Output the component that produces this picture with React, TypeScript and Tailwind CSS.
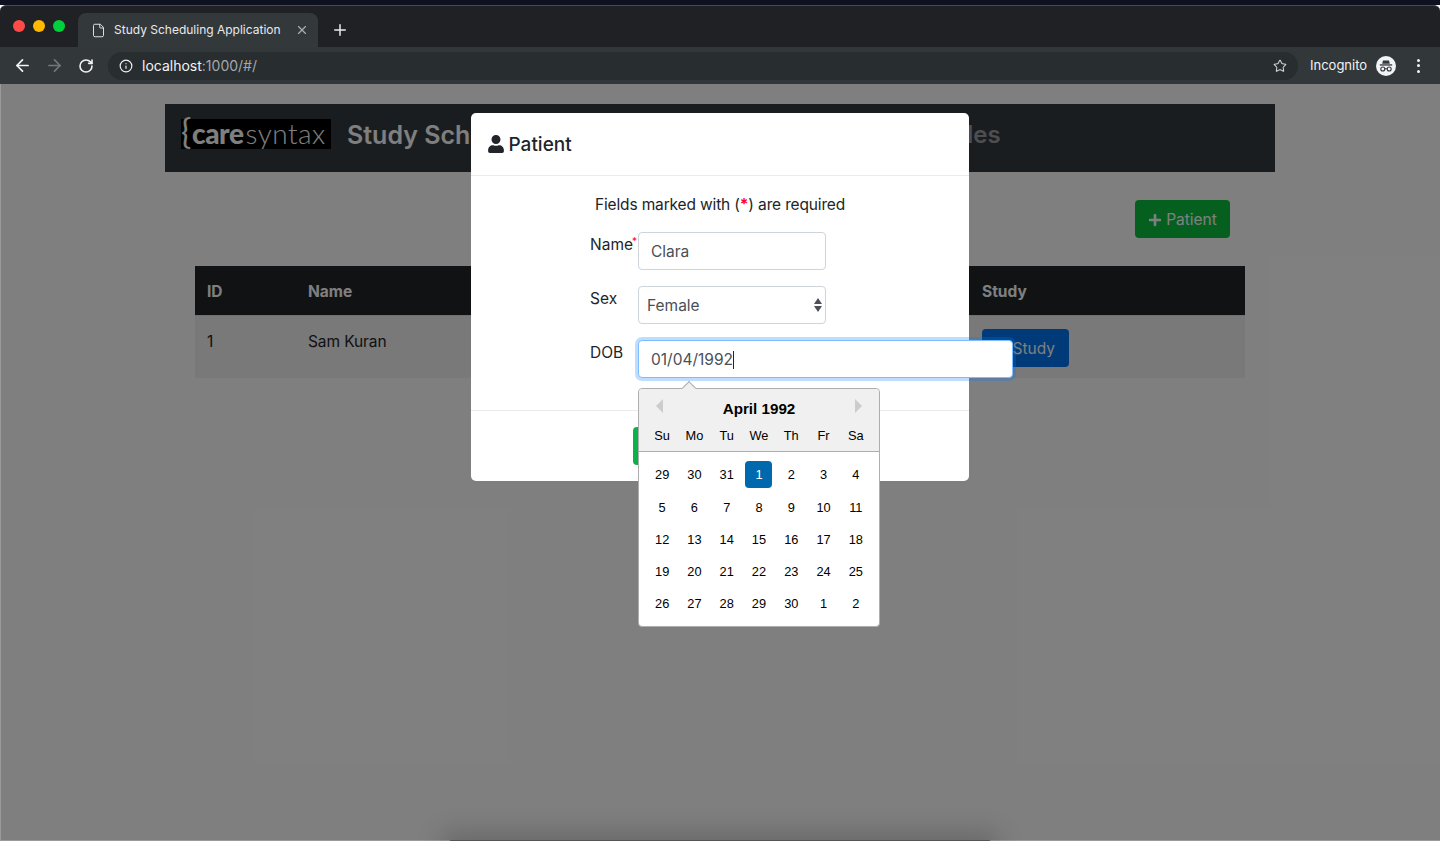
import React from 'react';
import { ArrowLeft, ArrowRight, File, Info, Plus, RotateCw, Star, X } from 'lucide-react';
import { FaPlus, FaUser } from 'react-icons/fa';

const WEEK_DAYS = ['Su', 'Mo', 'Tu', 'We', 'Th', 'Fr', 'Sa'];
const WEEKS = [
  [29, 30, 31, 1, 2, 3, 4],
  [5, 6, 7, 8, 9, 10, 11],
  [12, 13, 14, 15, 16, 17, 18],
  [19, 20, 21, 22, 23, 24, 25],
  [26, 27, 28, 29, 30, 1, 2],
];

const IncognitoIcon = () => (
  <svg viewBox="0 0 20 20" className="w-5 h-5">
    <circle cx="10" cy="10" r="10" fill="#f1f3f4" />
    <path d="M7 4.4h6l.8 3.4H6.200z" fill="#35363a" />
    <rect x="3.800" y="8.300" width="12.400" height="1.300" fill="#35363a" />
    <circle cx="6.800" cy="13" r="2" fill="none" stroke="#35363a" strokeWidth="1.100" />
    <circle cx="13.200" cy="13" r="2" fill="none" stroke="#35363a" strokeWidth="1.100" />
    <path d="M8.800 12.800h2.400" stroke="#35363a" strokeWidth="1" />
  </svg>
);

const BrowserChrome = () => (
  <div className="font-['Inter',sans-serif]">
    <div className="h-[5px] bg-[#0e1220]" />
    <div className="h-[42px] bg-[#202124] border-t border-[#4a4b4e] rounded-t-[6px] flex items-end">
      <div className="flex gap-2 self-center pl-[13px] w-[78px] mb-[1px]">
        <span className="w-3 h-3 rounded-full bg-[#ff4b47]" />
        <span className="w-3 h-3 rounded-full bg-[#ffb900]" />
        <span className="w-3 h-3 rounded-full bg-[#00d03c]" />
      </div>
      <div className="w-[240px] h-[34px] bg-[#33383b] rounded-t-[8px] flex items-center pl-[13px] pr-[9px] text-[#e8eaed]">
        <File size={15} strokeWidth={1.500} />
        <span className="ml-2 text-[12px] flex-1 whitespace-nowrap">Study Scheduling Application</span>
        <X size={14} className="text-[#a9adb0]" />
      </div>
      <Plus size={18} strokeWidth={2} className="text-[#e8eaed] ml-[13px] mb-[8px]" />
    </div>
    <div className="h-[37px] bg-[#32373a] flex items-center">
      <ArrowLeft size={19} strokeWidth={2.200} className="text-[#f1f3f4] ml-[13px]" />
      <ArrowRight size={19} strokeWidth={2.200} className="text-[#73777a] ml-[13px]" />
      <RotateCw size={16} strokeWidth={2.400} className="text-[#f1f3f4] ml-[14px]" />
      <div className="ml-[14px] w-[1190px] h-[28px] bg-[#282d30] rounded-full flex items-center pl-[11px] pr-[11px]">
        <Info size={14} className="text-[#f1f3f4]" />
        <span className="ml-[9px] text-[14px] text-[#f1f3f4] mb-[1px]">
          localhost<span className="text-[#a4a8ab]">:1000/#/</span>
        </span>
        <Star size={14} strokeWidth={1.800} className="text-[#d0d3d6] ml-auto" />
      </div>
      <span className="ml-3 text-[13px] text-[#f1f3f4]">Incognito</span>
      <span className="ml-[9px]"><IncognitoIcon /></span>
      <span className="ml-[21px] flex flex-col gap-[2.500px]">
        <i className="w-[3px] h-[3px] rounded-full bg-[#f1f3f4]" />
        <i className="w-[3px] h-[3px] rounded-full bg-[#f1f3f4]" />
        <i className="w-[3px] h-[3px] rounded-full bg-[#f1f3f4]" />
      </span>
    </div>
  </div>
);

const PatientsPage = () => (
  <div className="w-[1110px] mx-auto pt-5 font-['Inter',sans-serif] text-[15.500px] text-[#212529]">
    <div className="h-[68px] bg-[#343a40] flex items-start pl-4 pt-[15px]">
      <div className="w-[150px] h-[30px] bg-black flex items-center text-white font-['Lato',sans-serif] leading-none whitespace-nowrap">
        <span className="text-[34px] leading-[30px] mb-[6px] w-[11px]">{'{'}</span>
        <span className="text-[28px] font-black tracking-[-0.4px] mb-[2px]">care</span>
        <span className="text-[28px] font-light tracking-[0.5px] ml-[2px] mb-[2px]">syntax</span>
      </div>
      <span className="ml-4 text-[25px] leading-[32px] font-semibold text-white whitespace-nowrap">Study Scheduling Application</span>
      <span className="ml-[175px] text-[24px] leading-[32px] font-semibold text-white/50 whitespace-nowrap">Schedules</span>
    </div>
    <div className="flex justify-end pr-[45px] mt-7">
      <button className="w-[95px] h-[38px] pt-[2px] bg-[#0ac040] rounded-[4px] text-white flex items-center justify-center gap-[4px]">
        <FaPlus size={14} className="-mt-[1px]" /> Patient
      </button>
    </div>
    <div className="mx-[30px] mt-7">
      <div className="h-[49px] pt-[2px] bg-[#212529] text-white font-bold flex items-center">
        <span className="w-[101px] pl-3">ID</span>
        <span className="w-[674px] pl-3">Name</span>
        <span className="pl-3">Study</span>
      </div>
      <div className="h-[63px] bg-[#f2f2f2] border-t border-[#dee2e6] flex items-start">
        <span className="w-[101px] pl-3 pt-[14px]">1</span>
        <span className="w-[674px] pl-3 pt-[14px] tracking-[-0.1px]">Sam Kuran</span>
        <span className="pl-3 pt-[13px]">
          <button className="w-[87px] h-[38px] pt-[2px] bg-[#0074f0] rounded-[4px] text-white text-right pr-[14px]">Study</button>
        </span>
      </div>
    </div>
  </div>
);

const DatePicker = () => (
  <div className="absolute -left-px top-[calc(100%+11px)] w-[242px] h-[239px] bg-white border border-[#aeaeae] rounded-[4px] font-['Liberation_Sans',Arial,sans-serif] text-black">
    <div className="absolute -top-[6px] left-[45px] w-[10px] h-[10px] rotate-45 bg-[#f0f0f0] border-l border-t border-[#aeaeae]" />
    <div className="relative h-[63px] bg-[#f0f0f0] border-b border-[#aeaeae] rounded-t-[4px]">
      <span className="absolute left-[17px] top-[10px] border-y-[7px] border-y-transparent border-r-[7px] border-r-[#ccc]" />
      <span className="absolute right-[17px] top-[10px] border-y-[7px] border-y-transparent border-l-[7px] border-l-[#ccc]" />
      <div className="pt-[11px] text-center text-[15.200px] leading-[18px] font-bold">April 1992</div>
      <div className="flex px-[7px] mt-[10px]">
        {WEEK_DAYS.map((d) => (
          <span key={d} className="w-[32.500px] text-center text-[12.800px] leading-[16px]">{d}</span>
        ))}
      </div>
    </div>
    <div className="px-[7px] pt-[6.500px]">
      {WEEKS.map((week, i) => (
        <div key={i} className={`flex items-center ${i === 0 ? 'h-[33px] pb-[1px]' : 'h-[32px]'}`}>
          {week.map((day, j) => (
            <span key={j} className="w-[32.500px] flex justify-center text-[12.800px]">
              <span className={`w-[27px] h-[27px] flex items-center justify-center rounded-[4px] ${i === 0 && j === 3 ? 'bg-[#0069ae] text-white' : ''}`}>{day}</span>
            </span>
          ))}
        </div>
      ))}
    </div>
  </div>
);

const PatientModal = () => (
  <div className="absolute left-[471px] top-[113px] w-[498px] h-[368px] bg-white rounded-[5px] font-['Inter',sans-serif] text-[15.500px] text-[#212529] flex flex-col">
    <div className="h-[63px] pt-[2px] border-b border-[#e9ecef] flex items-center pl-4 text-[19px] font-medium gap-[4px]">
      <FaUser size={18} className="mb-[2px] -ml-[0.5px]" /> Patient
    </div>
    <div className="pt-4 pb-8 h-[235px] flex flex-col gap-4 border-b border-[#e9ecef]">
      <p className="pl-[124px] pt-[1px] -mb-[1px] leading-6 tracking-[-0.15px]">
        Fields marked with (<span className="text-[#ff0033] font-bold">*</span>) are required
      </p>
      <div className="flex pl-[119px]">
        <label className="w-[48px] shrink-0 pt-[1px] leading-6 relative">
          Name<span className="absolute left-[42px] -top-[3px] text-[#ff0033] text-[10px]">*</span>
        </label>
        <input readOnly value="Clara" className="w-[188px] h-[38px] px-3 border border-[#ced4da] rounded-[4px] text-[#495057] outline-none" />
      </div>
      <div className="flex pl-[119px]">
        <label className="w-[48px] shrink-0 pt-[1px] leading-6">Sex</label>
        <div className="relative w-[188px] h-[38px]">
          <select defaultValue="Female" className="appearance-none w-full h-full pl-2 pr-6 pt-[1px] border border-[#ced4da] rounded-[4px] bg-white text-[#495057] outline-none">
            <option>Female</option>
            <option>Male</option>
          </select>
          <span className="absolute right-[4px] top-[12px] flex flex-col gap-[2px] pointer-events-none">
            <i className="border-x-[4px] border-x-transparent border-b-[6px] border-b-[#4b5157]" />
            <i className="border-x-[4px] border-x-transparent border-t-[6px] border-t-[#4b5157]" />
          </span>
        </div>
      </div>
      <div className="flex pl-[119px]">
        <label className="w-[48px] shrink-0 pt-[1px] leading-6">DOB</label>
        <div className="relative shrink-0 w-[375px] h-[38px] px-3 pt-[2px] border border-[#80bdff] rounded-[4px] bg-white shadow-[0_0_0_3px_rgba(0,123,255,0.25)] flex items-center text-[#495057]">
          01/04/1992<span className="w-px h-[18px] bg-[#212529] -mt-[1px]" />
          <DatePicker />
        </div>
      </div>
    </div>
    <div className="pt-4 pl-[162px]">
      <button className="w-[90px] h-[38px] bg-[#0cb14b] rounded-[4px] text-white">Save</button>
    </div>
  </div>
);

export default function App() {
  return (
    <div className="relative w-[1440px] h-[841px] overflow-hidden bg-white">
      <BrowserChrome />
      <PatientsPage />
      {/* backdrop starts below the browser toolbar */}
      <div className="absolute left-0 right-0 top-[84px] bottom-0 bg-black/50" />
      <PatientModal />
      {/* edge of the window lying under this one */}
      <div className="absolute left-0 right-0 top-[840px] h-px bg-[#9a9a9a]" />
      <div className="absolute left-[450px] top-[840px] w-[540px] h-[20px] bg-[#555] shadow-[0_0_26px_8px_rgba(0,0,0,0.18)]" />
      <div className="absolute left-0 top-[84px] bottom-0 w-px bg-[#9a9a9a]" />
    </div>
  );
}
